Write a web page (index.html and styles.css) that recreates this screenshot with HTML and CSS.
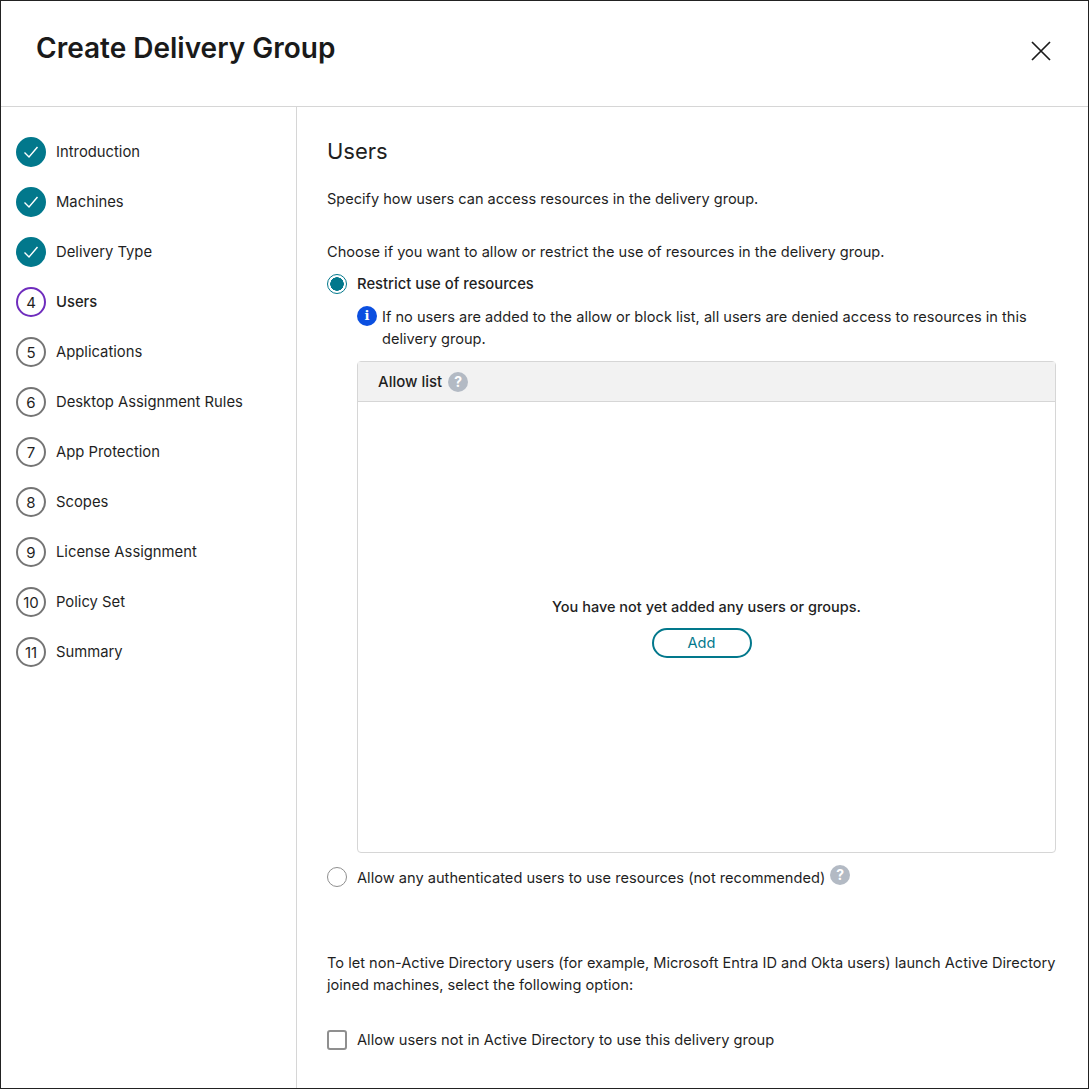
FILE: index.html
```html
<!DOCTYPE html>
<html lang="en">
<head>
<meta charset="utf-8">
<title>Create Delivery Group</title>
<link rel="stylesheet" href="styles.css">
</head>
<body>
<div class="dialog">
  <header class="head">
    <h1>Create Delivery Group</h1>
    <svg class="close" width="20" height="20" viewBox="0 0 20 20"><path d="M1 1L19 19M19 1L1 19" stroke="#1a1a1a" stroke-width="1.7" fill="none"/></svg>
  </header>
  <div class="body">
    <nav class="steps">
      <div class="step"><span class="dot done"><svg width="16" height="14" viewBox="0 0 16 14"><path d="M1.5 7.5L6 12L14.5 2" stroke="#fff" stroke-width="1.4" fill="none"/></svg></span><span class="label">Introduction</span></div>
      <div class="step"><span class="dot done"><svg width="16" height="14" viewBox="0 0 16 14"><path d="M1.5 7.5L6 12L14.5 2" stroke="#fff" stroke-width="1.4" fill="none"/></svg></span><span class="label">Machines</span></div>
      <div class="step"><span class="dot done"><svg width="16" height="14" viewBox="0 0 16 14"><path d="M1.5 7.5L6 12L14.5 2" stroke="#fff" stroke-width="1.4" fill="none"/></svg></span><span class="label">Delivery Type</span></div>
      <div class="step current"><span class="dot active">4</span><span class="label">Users</span></div>
      <div class="step"><span class="dot">5</span><span class="label">Applications</span></div>
      <div class="step"><span class="dot">6</span><span class="label">Desktop Assignment Rules</span></div>
      <div class="step"><span class="dot">7</span><span class="label">App Protection</span></div>
      <div class="step"><span class="dot">8</span><span class="label">Scopes</span></div>
      <div class="step"><span class="dot">9</span><span class="label">License Assignment</span></div>
      <div class="step"><span class="dot">10</span><span class="label">Policy Set</span></div>
      <div class="step"><span class="dot">11</span><span class="label">Summary</span></div>
    </nav>
    <main class="main">
      <h2>Users</h2>
      <p class="intro">Specify how users can access resources in the delivery group.</p>
      <p class="choose">Choose if you want to allow or restrict the use of resources in the delivery group.</p>
      <div class="radio-row strong"><span class="radio on"></span><span class="label">Restrict use of resources</span></div>
      <div class="info"><span class="info-icon">i</span><span>If no users are added to the allow or block list, all users are denied access to resources in this delivery group.</span></div>
      <section class="list">
        <div class="list-head">Allow list<span class="help">?</span></div>
        <div class="list-body">
          <div class="empty">You have not yet added any users or groups.</div>
          <div class="add">Add</div>
        </div>
      </section>
      <div class="radio-row any"><span class="radio"></span><span class="any-text">Allow any authenticated users to use resources (not recommended)</span><span class="help raised">?</span></div>
      <p class="nonad">To let non-Active Directory users (for example, Microsoft Entra ID and Okta users) launch Active Directory joined machines, select the following option:</p>
      <div class="check-row"><span class="check"></span>Allow users not in Active Directory to use this delivery group</div>
    </main>
  </div>
</div>
</body>
</html>
```
FILE: styles.css
```css
* { box-sizing: border-box; }
html, body { margin: 0; padding: 0; background: #fff; }
body { font-family: Inter, Roboto, "Liberation Sans", sans-serif; font-size: 14.6px; color: #1f1f1f; }
.dialog { width: 1089px; height: 1089px; border: 1px solid #222; display: flex; flex-direction: column; overflow: hidden; }
.head { height: 106px; flex: none; border-bottom: 1px solid #d6d6d6; display: flex; justify-content: space-between; padding: 30px 37px 0 35px; }
.head h1 { margin: 0; font-size: 28px; line-height: 34px; font-weight: 600; color: #1a1a1a; }
.close { margin-top: 10px; }
.body { flex: 1; display: flex; min-height: 0; }
.steps { width: 296px; flex: none; border-right: 1px solid #d6d6d6; padding: 20px 0 0 15px; font-size: 14.8px; }
.step { height: 50px; display: flex; align-items: center; gap: 10px; }
.label { padding-bottom: 1px; }
.step.current { font-weight: 500; }
.dot { width: 30px; height: 30px; border-radius: 50%; border: 2px solid #757575; display: flex; align-items: center; justify-content: center; font-size: 15px; font-weight: 400; }
.dot.done { background: #02788c; border-color: #02788c; }
.dot.active { border-color: #6f2dbd; }
.main { flex: 1; padding: 30px 32px 0 30px; min-width: 0; }
h2 { margin: 0; font-size: 22px; line-height: 28px; font-weight: 400; }
p { margin: 0; line-height: 22px; }
.intro { margin-top: 23px; font-size: 14.55px; }
.choose { margin-top: 31px; }
.radio-row { display: flex; align-items: center; gap: 10px; height: 22px; }
.strong { margin-top: 10px; font-weight: 500; font-size: 14.8px; }
.radio { width: 20px; height: 20px; border-radius: 50%; border: 1px solid #8f8f8f; flex: none; background: #fff; }
.radio.on { border: 1px solid #02788c; background: radial-gradient(circle, #02788c 0 6.5px, #fff 7px); }
.info { margin: 11px 0 0 30px; display: flex; gap: 5px; line-height: 22px; }
.info-icon { width: 20px; height: 20px; border-radius: 50%; background: #0b4fe0; color: #fff; font-family: "DejaVu Serif", serif; font-size: 13px; font-weight: 700; text-align: center; line-height: 20px; flex: none; }
.list { margin: 11px 0 0 30px; height: 492px; border: 1px solid #d6d6d6; border-radius: 4px; display: flex; flex-direction: column; }
.list-head { height: 40px; flex: none; background: #f2f2f2; border-bottom: 1px solid #d6d6d6; display: flex; align-items: center; gap: 6px; padding-left: 20px; font-weight: 500; font-size: 15px; }
.help { width: 20px; height: 20px; border-radius: 50%; background: #b3bac4; color: #fff; font-size: 14px; font-weight: 700; text-align: center; line-height: 20px; flex: none; }
.list-body { flex: 1; display: flex; flex-direction: column; align-items: center; padding-top: 194px; }
.empty { font-weight: 500; line-height: 22px; font-size: 14.5px; }
.add { margin: 10px 10px 0 0; width: 100px; height: 30px; border: 2px solid #02788c; border-radius: 15px; color: #02788c; text-align: center; line-height: 26px; }
.any { margin-top: 13px; }
.any-text { padding-top: 2px; font-size: 14.63px; }
.raised { margin: -4px 0 0 -5px; }
.nonad { margin-top: 64px; }
.check-row { margin-top: 33px; display: flex; align-items: center; gap: 10px; height: 22px; font-size: 14.65px; }
.check { width: 20px; height: 20px; border: 2px solid #8f8f8f; border-radius: 3px; flex: none; }
```
